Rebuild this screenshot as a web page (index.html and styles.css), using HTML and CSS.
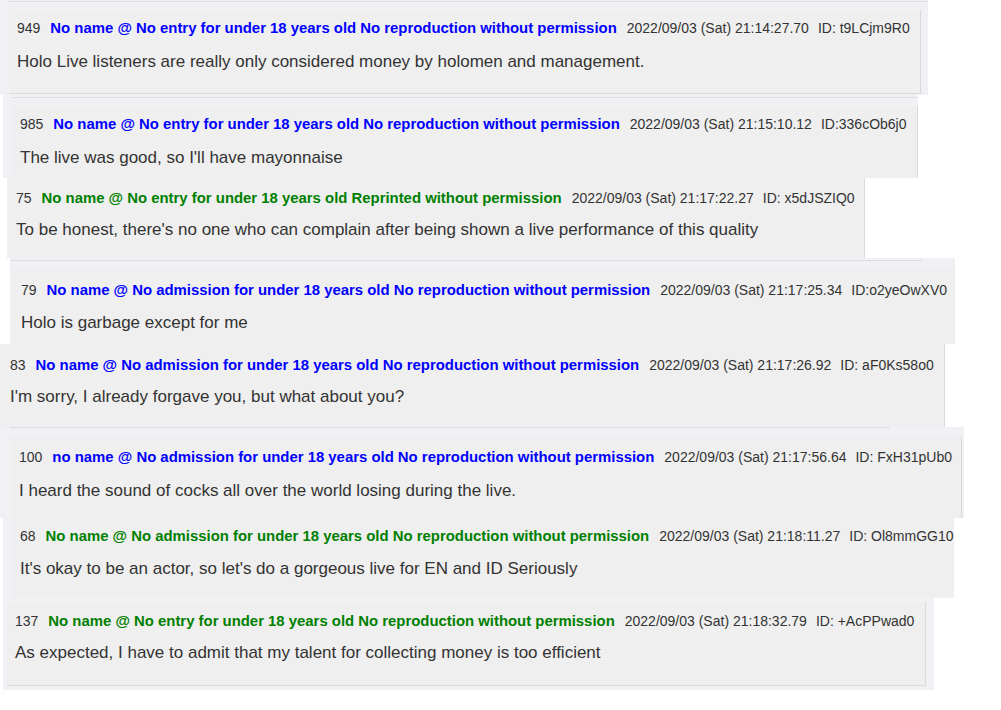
FILE: index.html
```html
<!DOCTYPE html>
<html lang="en">
<head>
<meta charset="utf-8">
<title>Thread</title>
<link rel="stylesheet" href="styles.css">
</head>
<body>
<div class="strip s1">
  <div class="line l1"></div>
  <div class="post p1">
    <div class="head"><span class="num">949</span><span class="name blue">No name @ No entry for under 18 years old No reproduction without permission</span><span class="date">2022/09/03 (Sat) 21:14:27.70</span><span class="uid">ID: t9LCjm9R0</span></div>
    <div class="body b1">Holo Live listeners are really only considered money by holomen and management.</div>
  </div>
</div>
<div class="strip s2">
  <div class="line l2"></div>
  <div class="post p2">
    <div class="head"><span class="num">985</span><span class="name blue">No name @ No entry for under 18 years old No reproduction without permission</span><span class="date">2022/09/03 (Sat) 21:15:10.12</span><span class="uid">ID:336cOb6j0</span></div>
    <div class="body b2">The live was good, so I'll have mayonnaise</div>
  </div>
</div>
<div class="strip s3 flat">
  <div class="post p3">
    <div class="head"><span class="num">75</span><span class="name green">No name @ No entry for under 18 years old Reprinted without permission</span><span class="date">2022/09/03 (Sat) 21:17:22.27</span><span class="uid">ID: x5dJSZIQ0</span></div>
    <div class="body b3">To be honest, there's no one who can complain after being shown a live performance of this quality</div>
  </div>
</div>
<div class="strip s4">
  <div class="line l4"></div>
  <div class="post p4">
    <div class="head"><span class="num">79</span><span class="name blue">No name @ No admission for under 18 years old No reproduction without permission</span><span class="date">2022/09/03 (Sat) 21:17:25.34</span><span class="uid">ID:o2yeOwXV0</span></div>
    <div class="body b4">Holo is garbage except for me</div>
  </div>
</div>
<div class="strip s5 flat">
  <div class="post p5">
    <div class="head"><span class="num">83</span><span class="name blue">No name @ No admission for under 18 years old No reproduction without permission</span><span class="date">2022/09/03 (Sat) 21:17:26.92</span><span class="uid">ID: aF0Ks58o0</span></div>
    <div class="body b5">I'm sorry, I already forgave you, but what about you?</div>
  </div>
</div>
<div class="strip s6">
  <div class="line l6"></div>
  <div class="post p6">
    <div class="head"><span class="num">100</span><span class="name blue">no name @ No admission for under 18 years old No reproduction without permission</span><span class="date">2022/09/03 (Sat) 21:17:56.64</span><span class="uid">ID: FxH31pUb0</span></div>
    <div class="body b6">I heard the sound of cocks all over the world losing during the live.</div>
  </div>
</div>
<div class="strip s7">
  <div class="post p7">
    <div class="head"><span class="num">68</span><span class="name green">No name @ No admission for under 18 years old No reproduction without permission</span><span class="date">2022/09/03 (Sat) 21:18:11.27</span><span class="uid">ID: Ol8mmGG10</span></div>
    <div class="body b7">It's okay to be an actor, so let's do a gorgeous live for EN and ID Seriously</div>
  </div>
</div>
<div class="strip s8">
  <div class="post p8">
    <div class="head"><span class="num">137</span><span class="name green">No name @ No entry for under 18 years old No reproduction without permission</span><span class="date">2022/09/03 (Sat) 21:18:32.79</span><span class="uid">ID: +AcPPwad0</span></div>
    <div class="body b8">As expected, I have to admit that my talent for collecting money is too efficient</div>
  </div>
</div>
</body>
</html>
```
FILE: styles.css
```css
html, body {
  margin: 0;
  padding: 0;
  background: #ffffff;
}
body {
  width: 1001px;
  height: 710px;
  overflow: hidden;
  font-family: "Liberation Sans", Arial, sans-serif;
  color: #333333;
}

.strip {
  box-sizing: border-box;
  background: #f0f0f5;
  overflow: hidden;
  display: flow-root;
}
.strip.flat {
  background: #efefef;
  border-right: 1px solid #dadada;
}

.line {
  height: 1px;
  background: #dcdcdc;
}

.post {
  box-sizing: border-box;
  background: #efefef;
  overflow: hidden;
  white-space: nowrap;
}

.head {
  display: flex;
  align-items: center;
  height: 20px;
  line-height: 20px;
  font-size: 14px;
  white-space: nowrap;
}
.num { margin-right: 10px; }
.name { font-weight: bold; font-size: 14.9px; margin-right: 10px; }
.name.blue { color: #0000ff; }
.name.green { color: #008000; }
.date { margin-right: 9px; }

.body {
  font-size: 17px;
  line-height: 22px;
  white-space: nowrap;
}

/* strip 1 : 949 */
.s1 { margin-left: 0; width: 928px; height: 95px; }
.l1 { margin: 1px 0 0 9px; }
.p1 {
  margin: 8px 0 0 9px; width: 912px; height: 84px;
  border-right: 1px solid #dadada; border-bottom: 1px solid #dadada;
  padding: 8px 0 0 8px;
}
.b1 { margin-top: 13px; }

/* strip 2 : 985 */
.s2 { margin-left: 3px; width: 915px; height: 83px; }
.l2 { margin: 2px 0 0 9px; }
.p2 {
  margin: 8px 0 0 9px; width: 906px; height: 72px;
  border-right: 1px solid #dadada;
  padding: 8px 0 0 8px;
}
.b2 { margin-top: 13px; }

/* strip 3 : 75 */
.s3 { margin-left: 7px; width: 858px; height: 80px; }
.p3 { height: 80px; padding: 10px 0 0 9px; }
.b3 { margin-top: 11px; }

/* strip 4 : 79 */
.s4 { margin-left: 10px; width: 945px; height: 86px; }
.l4 { margin: 2px 0 0 0; width: 912px; }
.p4 { margin: 7px 0 0 2px; height: 77px; padding: 12px 0 0 9px; }
.b4 { margin-top: 12px; }

/* strip 5 : 83 */
.s5 { margin-left: 0; width: 945px; height: 83px; }
.p5 { height: 83px; padding: 11px 0 0 10px; }
.b5 { margin-top: 11px; }

/* strip 6 : 100 */
.s6 { margin-left: 0; width: 964px; height: 91px; }
.l6 { margin: 0 0 0 10px; width: 880px; }
.p6 {
  margin: 9px 0 0 10px; width: 952px; height: 81px;
  border-right: 1px solid #dadada;
  padding: 10px 0 0 9px;
}
.b6 { margin-top: 13px; }

/* strip 7 : 68 */
.s7 { margin-left: 3px; width: 951px; height: 80px; }
.p7 { margin-left: 9px; height: 79px; padding: 8px 0 0 8px; }
.b7 { margin-top: 12px; }

/* strip 8 : 137 */
.s8 { margin-left: 3px; width: 931px; height: 92px; }
.p8 {
  margin: 4px 0 0 4px; width: 919px; height: 84px;
  border-right: 1px solid #dadada; border-bottom: 1px solid #dadada;
  padding: 9px 0 0 8px;
}
.b8 { margin-top: 11px; }
```
